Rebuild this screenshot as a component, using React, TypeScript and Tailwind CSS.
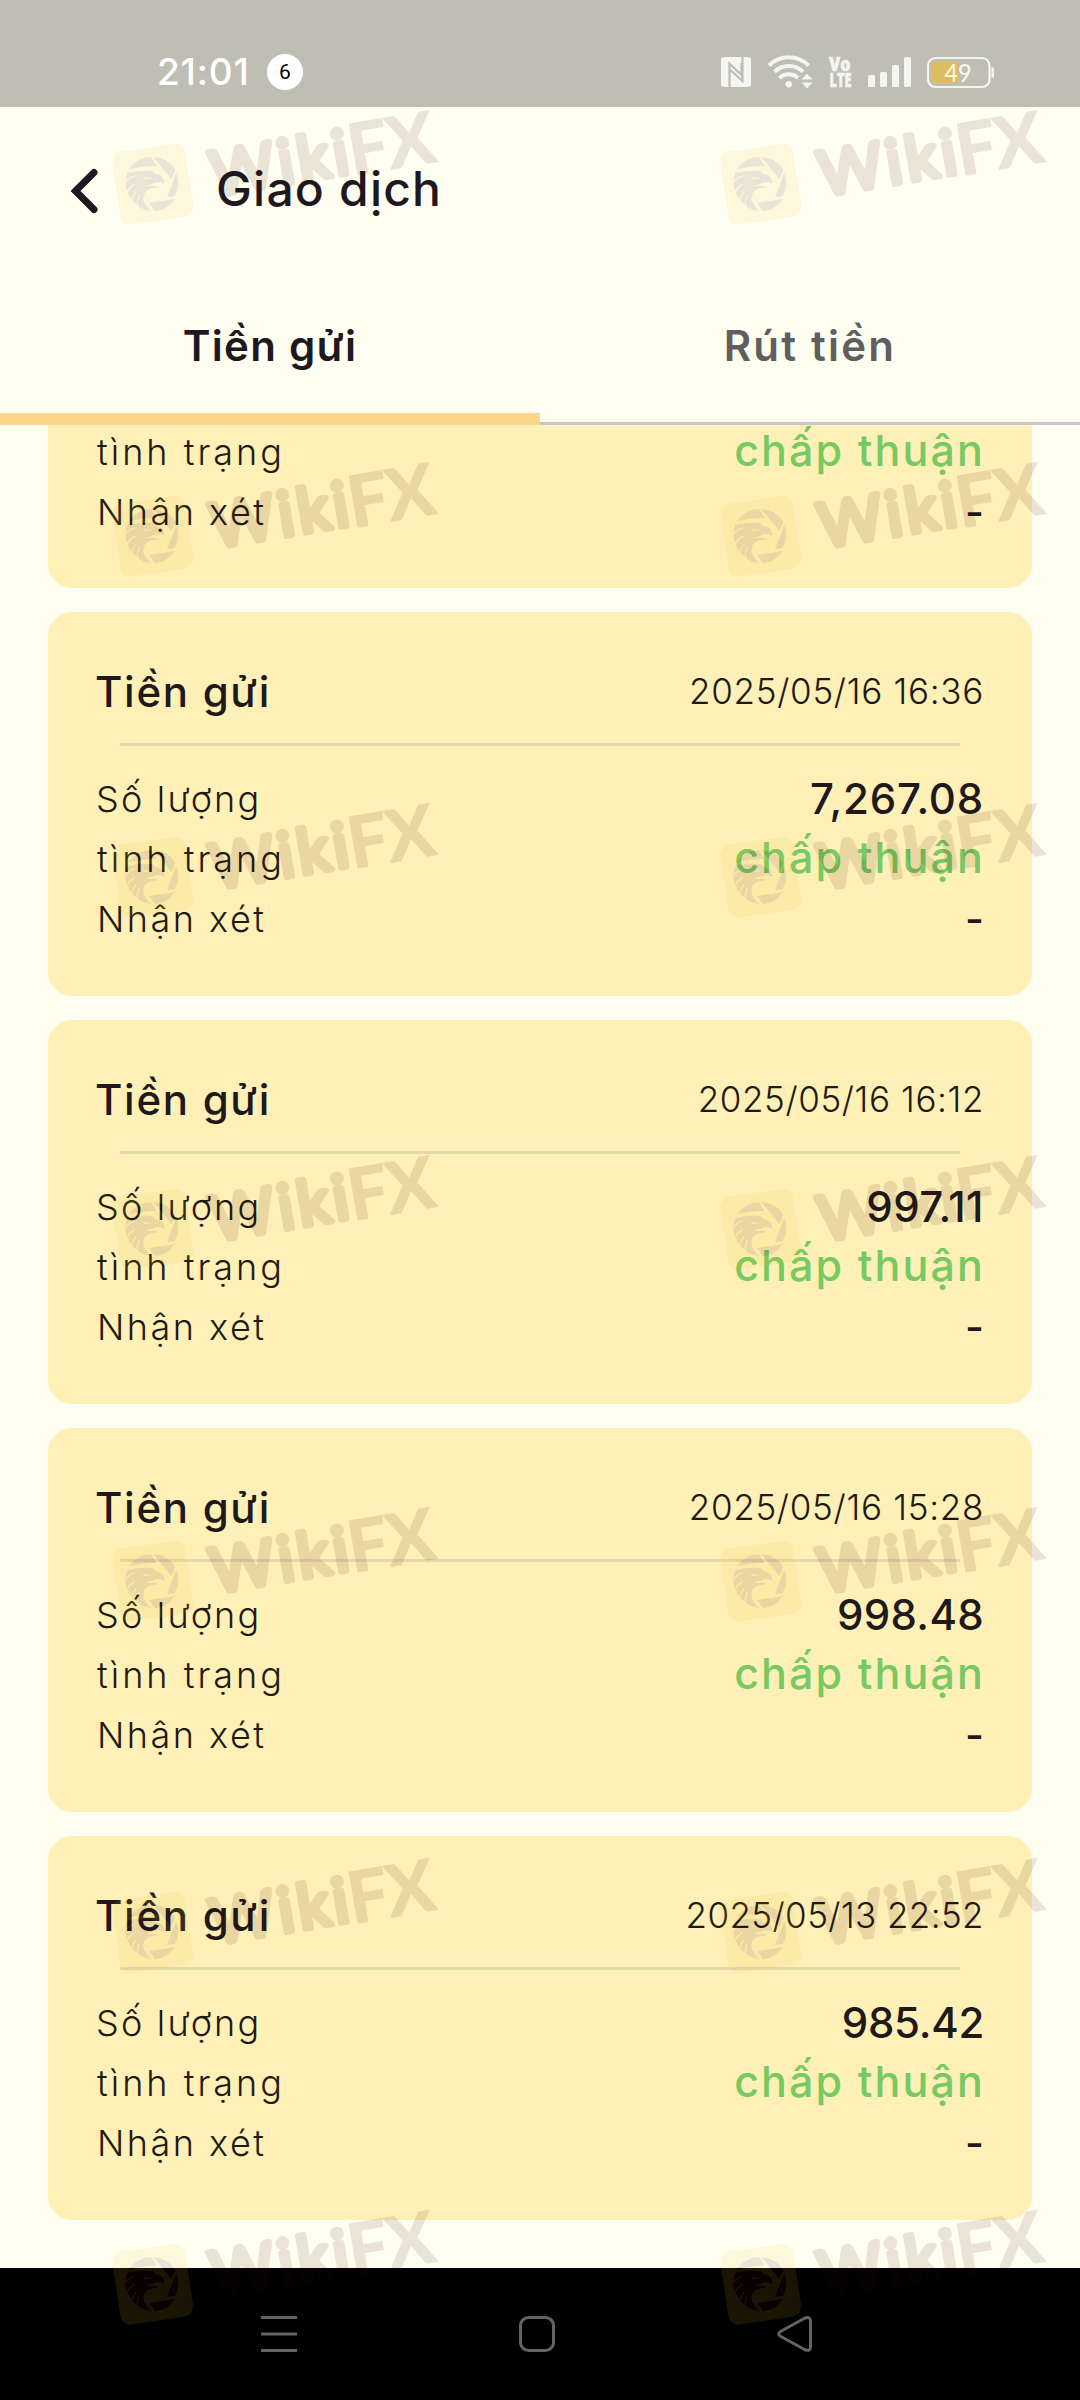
interface Transaction {
  id: number;
  date: string;
  amount: string;
  dateTracking: string;
  amountTracking: string;
}

const TRANSACTIONS: Transaction[] = [
  { id: 1, date: '2025/05/16 16:36', amount: '7,267.08', dateTracking: 'tracking-[0.7px]', amountTracking: 'tracking-[0.8px]' },
  { id: 2, date: '2025/05/16 16:12', amount: '997.11', dateTracking: 'tracking-[0.6px]', amountTracking: 'tracking-[0.5px]' },
  { id: 3, date: '2025/05/16 15:28', amount: '998.48', dateTracking: 'tracking-[0.7px]', amountTracking: 'tracking-[0.3px]' },
  { id: 4, date: '2025/05/13 22:52', amount: '985.42', dateTracking: 'tracking-[0.4px]', amountTracking: 'tracking-[-0.3px]' },
];

const WATERMARK_ROWS = [136, 488, 829, 1181, 1533, 1884, 2236];
const WATERMARK_COLS = [104, 712];

function StatusBar() {
  return (
    <div className="h-[107px] bg-[#bfbeb5] flex items-start justify-between pl-[157px] pr-[84px] pt-[52px]">
      <div className="flex items-center h-10">
        <span className="w-[93px] text-[37px] leading-10 font-medium tracking-[0.8px] text-white whitespace-nowrap">21:01</span>
        <span className="ml-[17px] size-9 rounded-full bg-white text-black font-[Roboto] text-[21px] leading-9 text-center">6</span>
      </div>
      <svg className="overflow-visible" width="276" height="40" viewBox="720 52 276 40" fill="none">
        {/* NFC */}
        <rect x="721" y="57" width="30" height="30" rx="2.5" fill="#f5f5f2" />
        <path d="M729.5 87V63.5L741.5 75V63M742.5 57V81L730.5 70" stroke="#bfbeb5" strokeWidth="2.2" />
        {/* Wi-Fi */}
        <g stroke="#f5f5f2" strokeWidth="4">
          <path d="M769 65.5a28 28 0 0 1 39.500 0" />
          <path d="M774.500 71.800a20.500 20.500 0 0 1 28.500 0" />
          <path d="M779.500 78a13 13 0 0 1 18.500 0" />
        </g>
        <circle cx="788.700" cy="84.300" r="3.200" fill="#f5f5f2" />
        <path d="M807 73.500l5.500 6h-11zM807 88.500l5.500-6h-11z" fill="#f5f5f2" />
        {/* VoLTE */}
        <g fill="#f5f5f2" stroke="#f5f5f2" strokeWidth="0.5" fontFamily="Open Sans, sans-serif" fontWeight="800" fontSize="19.500">
          <text x="829" y="71" textLength="21.500" lengthAdjust="spacingAndGlyphs">Vo</text>
          <text x="829.500" y="87" textLength="22" lengthAdjust="spacingAndGlyphs">LTE</text>
        </g>
        {/* Signal */}
        <g fill="#f5f5f2">
          <rect x="868" y="75" width="7" height="12" rx="1.500" />
          <rect x="880" y="72" width="7" height="15" rx="1.500" />
          <rect x="892" y="65" width="7" height="22" rx="1.500" />
          <rect x="904" y="57" width="7" height="30" rx="1.500" />
        </g>
        {/* Battery */}
        <rect x="928" y="58" width="61.500" height="29" rx="7.500" stroke="#f5f5f2" strokeWidth="2.200" />
        <rect x="931.500" y="61.500" width="27" height="22" rx="4" fill="#debd60" />
        <path d="M991.500 67q2.500 0 2.500 2.500v6q0 2.500-2.500 2.500z" fill="#f5f5f2" />
        <text x="944.500" y="82" fill="#fdf9ea" fontFamily="Lato, sans-serif" fontSize="24.500" textLength="27" lengthAdjust="spacingAndGlyphs">49</text>
      </svg>
    </div>
  );
}

function Header() {
  return (
    <header className="h-[168px] flex items-center pl-[69px]">
      <svg width="32" height="52" viewBox="0 0 32 52" fill="none" stroke="#1e1921" strokeWidth="7" strokeLinecap="round">
        <path d="M25 7.500L6.500 26L25 44.500" />
      </svg>
      <h1 className="ml-[115px] -mt-[4px] text-[48px] leading-[60px] font-[450] tracking-[1.2px] text-[#1e1921]">Giao dịch</h1>
    </header>
  );
}

function Tabs() {
  return (
    <nav className="h-[150px] grid grid-cols-2 text-[42px] leading-[60px] font-semibold text-center">
      <div className="pt-[41px] border-b-12 border-[#fad58a] text-[#1e1921]">
        <span className="tracking-[1.3px]">Tiền gửi</span>
      </div>
      <div className="pt-[41px] border-b-3 border-[#c9c5ca] text-[#605f5e]">
        <span className="tracking-[2.2px]">Rút tiền</span>
      </div>
    </nav>
  );
}

function StatusRows() {
  return (
    <>
      <div className="h-[60px] flex items-center justify-between">
        <span className="relative top-px ml-px text-[36px] font-[330] tracking-[3px] text-[#1f1a10]">tình trạng</span>
        <span className="relative -top-px -mr-px text-[43px] font-medium tracking-[2.1px] text-[#77ca61]">chấp thuận</span>
      </div>
      <div className="h-[60px] flex items-center justify-between">
        <span className="relative top-px ml-px text-[36px] font-[330] tracking-[2.5px] text-[#1f1a10]">Nhận xét</span>
        <span className="relative top-[2px] text-[41px] font-medium text-[#1f191a]">-</span>
      </div>
    </>
  );
}

function TransactionCard({ item }: { item: Transaction }) {
  return (
    <div className="h-96 rounded-3xl bg-[#fef0b7] px-12 pt-[49px]">
      <div className="h-[60px] flex items-center justify-between">
        <h2 className="-ml-px text-[42px] font-medium tracking-[1.7px] text-[#1f191a]">Tiền gửi</h2>
        <span className={`text-[35px] font-[330] text-[#1f1a10] ${item.dateTracking}`}>{item.date}</span>
      </div>
      <div className="mx-6 mt-[22px] mb-[22px] h-[3px] bg-[#e4d9ac]" />
      <div className="h-[60px] flex items-center justify-between">
        <span className="relative top-px text-[36px] font-[330] tracking-[2.2px] text-[#1f1a10]">Số lượng</span>
        <span className={`text-[42px] font-medium text-[#1f191a] ${item.amountTracking}`}>{item.amount}</span>
      </div>
      <StatusRows />
    </div>
  );
}

function SystemNav() {
  return (
    <div className="h-[132px] bg-black flex items-start pt-[46px] pl-[260px]">
      <svg width="554" height="40" viewBox="260 2314 554 40" fill="none" stroke="#636363" strokeWidth="3">
        <path d="M261 2317.500h36M261 2334h36M261 2350.500h36" />
        <rect x="520.500" y="2317.500" width="33" height="33" rx="8" />
        <path d="M780.500 2331.500L804.500 2318.300Q810.500 2316 810.500 2321V2347Q810.500 2352 804.500 2349.500L780.500 2336.300Q777 2334 780.500 2331.500Z" />
      </svg>
    </div>
  );
}

function Watermark({ x, y }: { x: number; y: number }) {
  return (
    <g transform={`translate(${x} ${y})`} opacity="0.1">
      <rect x="12" y="11.500" width="73.500" height="73.500" rx="10" fill="#f0be28" transform="rotate(-8.500 48.700 48.300)" />
      {/* eagle inside the aperture, drawn on a 270 unit grid */}
      <g transform="translate(3 4) scale(0.3333)" fill="#3c0000">
        <path d="M66 88A82 82 0 0 1 132 51L149 77Q100 79 66 88Z" />
        <path d="M139 51A82 82 0 0 1 205 90L193 117Z" />
        <path d="M208 98A82 82 0 0 1 203 168L180 172Z" />
        <path d="M203 177A82 82 0 0 1 143 214L127 189Z" />
        <path d="M61 98Q98 90 136 93L144 101Q174 106 172 131Q162 125 148 127L126 135L158 140L148 143C116 141 100 168 115 192Q122 204 132 214Q108 210 93 197A82 82 0 0 1 61 98Z" />
        <g fill="none" stroke="#f0be28" strokeWidth="3.500">
          <path d="M109 112Q120 119 131 112" />
          <path d="M53 128Q66 113 84 108M57 160Q68 142 84 132M72 184Q76 168 88 154M93 208Q88 186 97 165" />
          <path d="M122 137Q142 133 160 139" />
        </g>
      </g>
      <g transform="translate(254.500 38.700) rotate(-9.700)" fill="#3c0000" stroke="#3c0000" strokeLinejoin="round" fontFamily="Lato, sans-serif">
        <text x="-145.500 -77 -57.500 -21.800" y="-3" fontWeight="400" fontSize="62" strokeWidth="6">Wiki</text>
        <text x="-6 33" y="0" fontWeight="700" fontSize="71" strokeWidth="1.500">FX</text>
      </g>
    </g>
  );
}

export default function App() {
  return (
    <div className="relative w-[1080px] h-[2400px] overflow-hidden bg-[#fffff1] font-[Inter,sans-serif]">
      <StatusBar />
      <Header />
      <Tabs />

      <main className="h-[1843px] px-12 flex flex-col gap-6">
        {/* card scrolled under the tabs */}
        <div className="h-[163px] shrink-0 overflow-hidden rounded-b-3xl bg-[#fef0b7] px-12">
          <div className="-mt-1">
            <StatusRows />
          </div>
        </div>
        {TRANSACTIONS.map((item) => (
          <TransactionCard key={item.id} item={item} />
        ))}
      </main>

      <SystemNav />

      {/* Watermark overlay */}
      <svg className="absolute inset-0 pointer-events-none" width="1080" height="2400" viewBox="0 0 1080 2400">
        {WATERMARK_ROWS.map((y) => WATERMARK_COLS.map((x) => <Watermark key={`${x}-${y}`} x={x} y={y} />))}
      </svg>
    </div>
  );
}
